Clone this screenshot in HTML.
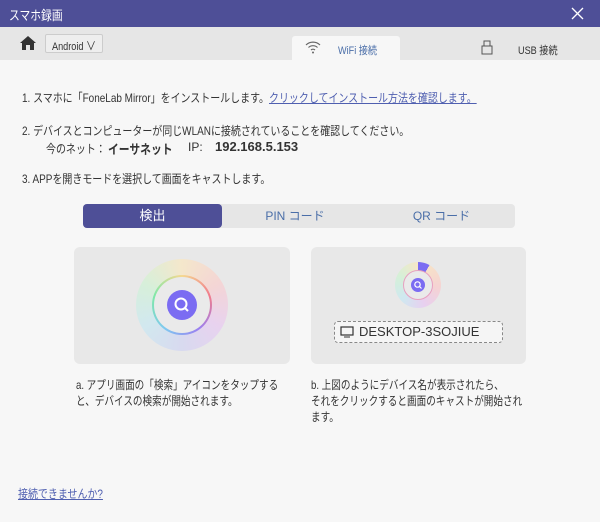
<!DOCTYPE html>
<html><head><meta charset="utf-8"><style>
*{margin:0;padding:0;box-sizing:border-box}
body{width:600px;height:522px;background:#f7f7f7;font-family:"Liberation Sans","Noto Sans CJK JP",sans-serif;font-size:12px;color:#333;position:relative;overflow:hidden}
.a{position:absolute;white-space:nowrap}
.t{font-size:12px;transform:scaleX(0.83);transform-origin:0 0}
</style></head><body>
<div class="a" style="left:0;top:0;width:600px;height:27px;background:#4e4f97"></div>
<div class="a t" style="left:9px;top:5px;color:#fff;font-size:13px">スマホ録画</div>
<svg class="a" style="left:571px;top:7px" width="13" height="13" viewBox="0 0 13 13"><path d="M1 1l11 11M12 1L1 12" stroke="#fff" stroke-width="1.3"/></svg>
<div class="a" style="left:0;top:27px;width:600px;height:33px;background:#e6e6e6"></div>
<svg class="a" style="left:20px;top:36px" width="16" height="14" viewBox="0 0 16 14"><path d="M8 0L0 7h2v7h4V9h4v5h4V7h2z" fill="#333"/></svg>
<div class="a" style="left:45px;top:34px;width:58px;height:19px;border:1px solid #ccc;background:#eee;border-radius:2px"></div>
<div class="a t" style="left:52px;top:37px;font-size:11px">Android <span style="font-size:12px">∨</span></div>
<div class="a" style="left:292px;top:36px;width:108px;height:24px;background:#f7f7f7;border-radius:3px 3px 0 0"></div>
<svg class="a" style="left:305px;top:40px" width="16" height="14" viewBox="0 0 16 14"><path d="M1 5a10 10 0 0 1 14 0M3.5 7.5a6.5 6.5 0 0 1 9 0M6 10a3 3 0 0 1 4 0" stroke="#666" fill="none" stroke-width="1.2"/><circle cx="8" cy="12.5" r="1" fill="#666"/></svg>
<div class="a t" style="left:338px;top:42px;font-size:11px;color:#4a6ea8">WiFi 接続</div>
<svg class="a" style="left:481px;top:40px" width="12" height="15" viewBox="0 0 12 15"><rect x="3" y="1" width="6" height="5" fill="none" stroke="#555"/><rect x="1" y="6" width="10" height="8" fill="none" stroke="#555"/></svg>
<div class="a t" style="left:518px;top:42px;font-size:11px">USB 接続</div>
<div class="a t" style="left:22px;top:89px">1. スマホに「FoneLab Mirror」をインストールします。<span style="color:#4f5fb0;text-decoration:underline">クリックしてインストール方法を確認します。</span></div>
<div class="a t" style="left:22px;top:122px">2. デバイスとコンピューターが同じWLANに接続されていることを確認してください。</div>
<div class="a t" style="left:46px;top:140px">今のネット：</div>
<div class="a t" style="left:108px;top:139px;font-weight:bold;font-size:13px">イーサネット</div>
<div class="a" style="left:188px;top:140px">IP:</div>
<div class="a" style="left:215px;top:139px;font-weight:bold;font-size:13px">192.168.5.153</div>
<div class="a t" style="left:22px;top:170px">3. APPを開きモードを選択して画面をキャストします。</div>
<div class="a" style="left:83px;top:204px;width:432px;height:24px;background:#e6e6e6;border-radius:4px"></div>
<div class="a" style="left:83px;top:204px;width:139px;height:24px;background:#4e4f97;border-radius:4px;color:#fff;text-align:center;line-height:24px;font-size:13px">検出</div>
<div class="a" style="left:222px;top:204px;width:146px;height:24px;color:#4a6ea8;text-align:center;line-height:24px;font-size:12px">PIN コード</div>
<div class="a" style="left:368px;top:204px;width:147px;height:24px;color:#4a6ea8;text-align:center;line-height:24px;font-size:12px">QR コード</div>
<div class="a" style="left:74px;top:247px;width:216px;height:117px;background:#e8e8e8;border-radius:6px"></div>
<div class="a" style="left:311px;top:247px;width:215px;height:117px;background:#e8e8e8;border-radius:6px"></div>
<div class="a" style="left:136px;top:259px;width:92px;height:92px;border-radius:50%;background:conic-gradient(#f6e7c8,#f5d3d3,#e8d0f0,#d6d8f0,#cfe8f0,#d5f0d8,#f6e7c8);opacity:.9"></div>
<div class="a" style="left:152px;top:275px;width:60px;height:60px;border-radius:50%;background:conic-gradient(#f5d890,#f07b8c,#9b7ff0,#7fc9f0,#7fe8a8,#f5d890)"></div>
<div class="a" style="left:154px;top:277px;width:56px;height:56px;border-radius:50%;background:#eaeaea"></div>
<div class="a" style="left:167px;top:290px;width:30px;height:30px;border-radius:50%;background:#7b6cf2"></div>
<svg class="a" style="left:172px;top:295px" width="20" height="20" viewBox="0 0 20 20"><circle cx="9" cy="9" r="5.5" fill="none" stroke="#fff" stroke-width="2"/><path d="M13 13l3 3" stroke="#fff" stroke-width="2"/></svg>
<div class="a" style="left:395px;top:262px;width:46px;height:46px;border-radius:50%;background:conic-gradient(#7b6cf2 0 30deg,#f6e1c8 30deg,#f5d3d3,#e8d0f0,#cfe8f0,#d5f0d8,#f6e7c8)"></div>
<div class="a" style="left:403px;top:270px;width:30px;height:30px;border-radius:50%;background:#eaeaea;border:1px solid #e7a0c0"></div>
<div class="a" style="left:411px;top:278px;width:14px;height:14px;border-radius:50%;background:#7b6cf2"></div>
<svg class="a" style="left:413px;top:280px" width="10" height="10" viewBox="0 0 10 10"><circle cx="4.5" cy="4.5" r="2.7" fill="none" stroke="#fff" stroke-width="1.2"/><path d="M6.5 6.5l2 2" stroke="#fff" stroke-width="1.2"/></svg>
<div class="a" style="left:334px;top:321px;width:169px;height:22px;border:1px dashed #888;border-radius:4px;background:#f5f5f5"></div>
<svg class="a" style="left:340px;top:326px" width="14" height="12" viewBox="0 0 14 12"><rect x="1" y="1" width="12" height="8" fill="none" stroke="#333" stroke-width="1.2"/><path d="M4 11h6" stroke="#333"/></svg>
<div class="a" style="left:359px;top:324px;font-size:13px">DESKTOP-3SOJIUE</div>
<div class="a t" style="left:76px;top:377px;line-height:16px;transform:scaleX(0.8)">a. アプリ画面の「検索」アイコンをタップする<br>と、デバイスの検索が開始されます。</div>
<div class="a t" style="left:311px;top:377px;line-height:16px;transform:scaleX(0.8)">b. 上図のようにデバイス名が表示されたら、<br>それをクリックすると画面のキャストが開始され<br>ます。</div>
<div class="a t" style="left:18px;top:485px;color:#4f5fb0;text-decoration:underline">接続できませんか?</div>
</body></html>
